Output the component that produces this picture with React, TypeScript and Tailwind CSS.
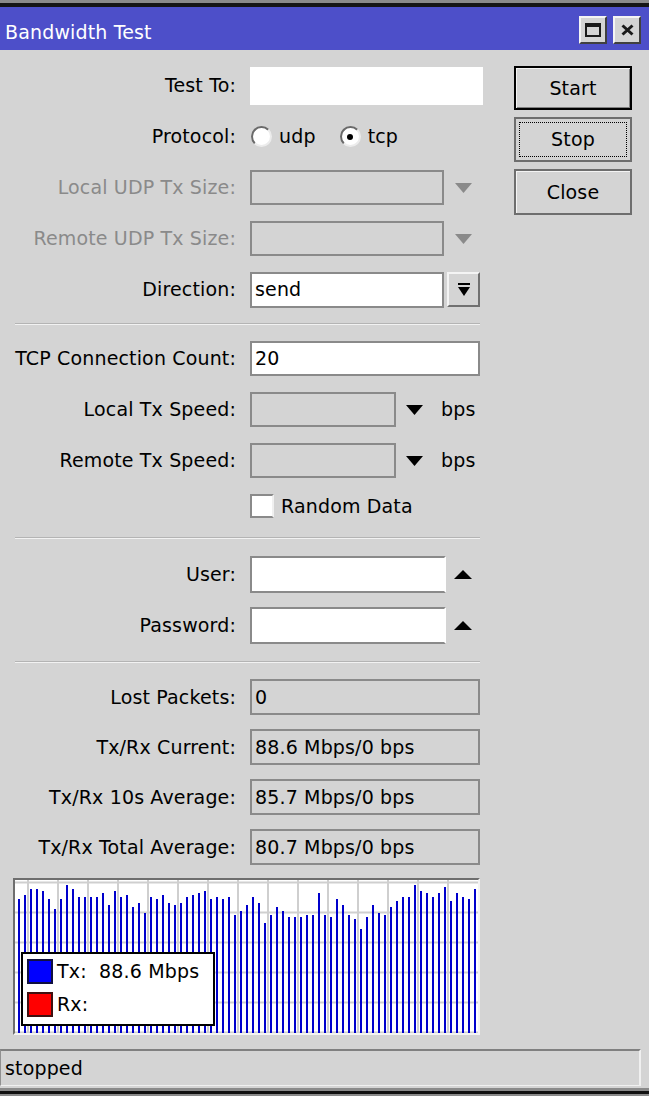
import type { ReactNode } from "react";

const TOPS = [
  899, 895, 889, 889, 891, 899, 909, 899, 885, 889, 897, 897, 897, 897, 893, 905, 891, 897, 895, 907,
  903, 913, 897, 899, 895, 903, 905, 903, 897, 895, 893, 891, 899, 897, 899, 897, 915, 911, 905, 897,
  903, 923, 915, 907, 911, 917, 917, 917, 915, 915, 893, 915, 917, 899, 905, 915, 919, 929, 917, 905,
  913, 915, 907, 901, 897, 897, 885, 891, 893, 897, 893, 887, 901, 893, 897, 899, 889,
];

function Row({ label, disabled, className = "h-[51px]", children }: { label?: string; disabled?: boolean; className?: string; children: ReactNode }) {
  return (
    <div className={`flex items-center ${className}`}>
      <div className={`w-[236px] text-right ${disabled ? "text-[#8a8a8a]" : "text-black"}`}>{label}</div>
      <div className="ml-[14px] flex items-center">{children}</div>
    </div>
  );
}

function Sep({ className }: { className: string }) {
  return (
    <div className={`ml-[15px] w-[465px] ${className}`}>
      <div className="h-px bg-[#b4b4b4]" />
      <div className="h-px bg-[#f2f2f2]" />
    </div>
  );
}

function Down({ color }: { color: string }) {
  return (
    <svg width="17" height="10" viewBox="0 0 17 10"><path d="M0 0h17L8.5 10Z" fill={color} /></svg>
  );
}

function Up() {
  return (
    <svg width="18" height="9" viewBox="0 0 18 9"><path d="M0 9h18L9 0Z" fill="#000" /></svg>
  );
}

function Radio({ checked }: { checked?: boolean }) {
  return (
    <span className="w-[21px] h-[21px] rounded-full bg-white border-2 border-t-[#6a6a6a] border-l-[#6a6a6a] border-r-[#ececec] border-b-[#ececec] flex items-center justify-center">
      {checked ? <span className="w-[6px] h-[6px] rounded-full bg-black" /> : null}
    </span>
  );
}

function Field({ value, className }: { value?: string; className: string }) {
  return (
    <div className={`border-2 border-[#8a8a8a] flex items-center pl-[3px] ${className}`}>{value}</div>
  );
}

function Graph() {
  return (
    <div className="relative ml-[13px] mt-[6px] w-[467px] h-[157px] border-2 border-t-[#6e6e6e] border-l-[#6e6e6e] border-r-[#f4f4f4] border-b-[#f4f4f4] bg-white">
      <svg width="463" height="153" className="block">
        {Array.from({ length: 15 }).map((_, k) => (
          <line key={`v${k}`} x1={13 + 30 * k} y1="0" x2={13 + 30 * k} y2="153" stroke="#cfcfcf" strokeWidth="2" />
        ))}
        {Array.from({ length: 6 }).map((_, k) => (
          <line key={`h${k}`} x1="0" y1={2.5 + 30 * k} x2="463" y2={2.5 + 30 * k} stroke="#cfcfcf" strokeWidth="2" />
        ))}
        {TOPS.map((t, i) => (
          <rect key={i} x={3 + 6 * i} y={t - 880} width="2" height={153 - (t - 880)} fill="#0000cc" />
        ))}
      </svg>
      <div className="absolute left-[6px] top-[72px] w-[194px] h-[74px] border-2 border-black bg-white flex flex-col pl-[4px] pt-[5px] gap-[8px]">
        <div className="flex items-center h-[25px]">
          <span className="w-[26px] h-[25px] bg-[#0000ff] border-2 border-[#101040]" />
          <span className="ml-[4px] whitespace-pre">Tx:  88.6 Mbps</span>
        </div>
        <div className="flex items-center h-[25px]">
          <span className="w-[26px] h-[25px] bg-[#ff0000] border-2 border-[#401010]" />
          <span className="ml-[4px]">Rx:</span>
        </div>
      </div>
    </div>
  );
}

export default function App() {
  return (
    <div className="w-[649px] min-h-[1096px] bg-[#8a8a8a] font-['DejaVu_Sans',sans-serif] text-[19px] tracking-[0.15px] text-black leading-none">
      <div className="h-[3px] bg-[#8a8a8a]" />
      <div className="h-[4px] bg-[#151515]" />
      <div className="h-[43px] bg-[#4d4fc9] flex items-center justify-between pl-[5px] pr-[8px]">
        <span className="text-white pt-[8px]">Bandwidth Test</span>
        <div className="flex gap-[6px] mt-[3px]">
          <div className="w-[28px] h-[28px] bg-[#d4d4d4] border-2 border-t-[#f4f4f4] border-l-[#f4f4f4] border-r-[#404040] border-b-[#404040] flex items-center justify-center">
            <span className="w-[16px] h-[14px] border-2 border-t-[4px] border-[#1a1a1a]" />
          </div>
          <div className="w-[28px] h-[28px] bg-[#d4d4d4] border-2 border-t-[#f4f4f4] border-l-[#f4f4f4] border-r-[#404040] border-b-[#404040] flex items-center justify-center">
            <svg width="13" height="12" viewBox="0 0 13 12"><path d="M1.5 1.5l10 9M11.5 1.5l-10 9" stroke="#1a1a1a" strokeWidth="3" /></svg>
          </div>
        </div>
      </div>

      <div className="bg-[#d4d4d4] pb-[2px]">
        <div className="flex">
          <div className="w-[490px] pt-[10px]">
            <Row label="Test To:">
              <div className="w-[233px] h-[38px] bg-white" />
            </Row>
            <Row label="Protocol:">
              <span className="ml-px"><Radio /></span>
              <span className="ml-[7px]">udp</span>
              <span className="ml-[24px]"><Radio checked /></span>
              <span className="ml-[7px]">tcp</span>
            </Row>
            <Row label="Local UDP Tx Size:" disabled>
              <Field className="w-[194px] h-[35px]" />
              <span className="ml-[11px]"><Down color="#8a8a8a" /></span>
            </Row>
            <Row label="Remote UDP Tx Size:" disabled>
              <Field className="w-[194px] h-[35px]" />
              <span className="ml-[11px]"><Down color="#8a8a8a" /></span>
            </Row>
            <Row label="Direction:">
              <Field value="send" className="w-[194px] h-[36px] bg-white" />
              <div className="ml-[3px] w-[33px] h-[35px] bg-[#d4d4d4] border-2 border-t-[#f4f4f4] border-l-[#f4f4f4] border-r-[#707070] border-b-[#707070] flex items-center justify-center">
                <svg width="12" height="13" viewBox="0 0 12 13"><rect x="0" y="0" width="12" height="2" fill="#000" /><path d="M0 4h12L6 13Z" fill="#000" /></svg>
              </div>
            </Row>

            <Sep className="mt-[8px] mb-[8px]" />

            <Row label="TCP Connection Count:">
              <Field value="20" className="w-[230px] h-[35px] bg-white" />
            </Row>
            <Row label="Local Tx Speed:">
              <Field className="w-[146px] h-[35px]" />
              <span className="ml-[10px]"><Down color="#000" /></span>
              <span className="ml-[18px]">bps</span>
            </Row>
            <Row label="Remote Tx Speed:">
              <Field className="w-[146px] h-[35px]" />
              <span className="ml-[10px]"><Down color="#000" /></span>
              <span className="ml-[18px]">bps</span>
            </Row>
            <Row className="h-[40px]">
              <span className="w-[24px] h-[24px] bg-white border-2 border-[#8a8a8a] border-r-[#f0f0f0]" />
              <span className="ml-[7px]">Random Data</span>
            </Row>

            <Sep className="mt-[11px] mb-[10px]" />

            <Row label="User:">
              <Field className="w-[196px] h-[37px] bg-white border-r-white" />
              <span className="ml-[8px]"><Up /></span>
            </Row>
            <Row label="Password:">
              <Field className="w-[196px] h-[37px] bg-white border-r-white" />
              <span className="ml-[8px]"><Up /></span>
            </Row>

            <Sep className="mt-[10px] mb-[9px]" />

            <Row label="Lost Packets:" className="h-[50px]">
              <Field value="0" className="w-[230px] h-[36px]" />
            </Row>
            <Row label="Tx/Rx Current:" className="h-[50px]">
              <Field value="88.6 Mbps/0 bps" className="w-[230px] h-[36px]" />
            </Row>
            <Row label="Tx/Rx 10s Average:" className="h-[50px]">
              <Field value="85.7 Mbps/0 bps" className="w-[230px] h-[36px]" />
            </Row>
            <Row label="Tx/Rx Total Average:" className="h-[50px]">
              <Field value="80.7 Mbps/0 bps" className="w-[230px] h-[36px]" />
            </Row>

            <Graph />
          </div>

          <div className="ml-[24px] pt-[16px] flex flex-col gap-[7px]">
            <button type="button" className="w-[118px] h-[44px] border-2 border-black bg-[#d4d4d4] shadow-[inset_1px_1px_0_#f4f4f4,inset_-1px_-1px_0_#808080] flex items-center justify-center">Start</button>
            <button type="button" className="w-[118px] h-[45px] border-2 border-[#6e6e6e] bg-[#d4d4d4] p-[3px] flex">
              <span className="flex-1 border border-dotted border-black flex items-center justify-center">Stop</span>
            </button>
            <button type="button" className="w-[118px] h-[46px] border-2 border-[#6e6e6e] bg-[#d4d4d4] shadow-[inset_1px_1px_0_#f4f4f4] flex items-center justify-center">Close</button>
          </div>
        </div>

        <div className="mt-[14px] w-[641px] h-[37px] border-t-2 border-t-[#808080] border-l border-l-[#909090] border-r-2 border-r-[#f0f0f0] border-b border-b-[#f0f0f0] flex items-center pl-[4px]">stopped</div>
      </div>
      <div className="h-[3px] bg-[#8a8a8a]" />
      <div className="h-[3px] bg-[#111111]" />
    </div>
  );
}
